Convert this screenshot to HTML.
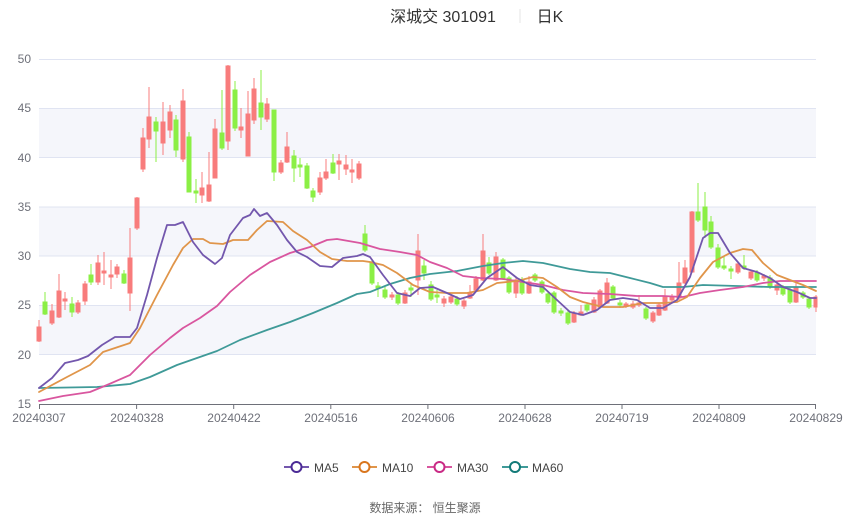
<!DOCTYPE html>
<html><head><meta charset="utf-8"><style>
body{margin:0;background:#fff;width:850px;height:517px;overflow:hidden;font-family:"Liberation Sans","Noto Sans CJK SC",sans-serif}
</style></head><body>
<svg width="850" height="517" xmlns="http://www.w3.org/2000/svg" style="display:block;font-family:'Liberation Sans','Noto Sans CJK SC',sans-serif">
<rect x="0" y="0" width="850" height="517" fill="#fff"/>
<text x="443" y="22" font-size="16" fill="#333" text-anchor="middle">深城交 301091</text>
<line x1="520" y1="9" x2="520" y2="23" stroke="#e6e6e6" stroke-width="1"/>
<text x="550" y="22" font-size="16" fill="#333" text-anchor="middle">日K</text>
<g fill="#f5f6fb">
<rect x="39" y="108.3" width="777" height="49.3"/>
<rect x="39" y="206.9" width="777" height="49.2"/>
<rect x="39" y="305.4" width="777" height="49.3"/>
</g>
<g stroke="#e0e4f2" stroke-width="1">
<line x1="39" y1="59.5" x2="816" y2="59.5"/>
<line x1="39" y1="108.5" x2="816" y2="108.5"/>
<line x1="39" y1="157.5" x2="816" y2="157.5"/>
<line x1="39" y1="207" x2="816" y2="207"/>
<line x1="39" y1="256" x2="816" y2="256"/>
<line x1="39" y1="305.5" x2="816" y2="305.5"/>
<line x1="39" y1="354.5" x2="816" y2="354.5"/>
</g>
<g font-size="12" fill="#6e7079" text-anchor="end">
<text x="31" y="63">50</text><text x="31" y="112">45</text><text x="31" y="162">40</text>
<text x="31" y="211">35</text><text x="31" y="260">30</text><text x="31" y="309">25</text>
<text x="31" y="359">20</text><text x="31" y="408">15</text>
</g>
<line x1="39" y1="404.5" x2="816" y2="404.5" stroke="#6e7079"/>
<g stroke="#6e7079">
<line x1="39.5" y1="404" x2="39.5" y2="409"/><line x1="136.6" y1="404" x2="136.6" y2="409"/>
<line x1="233.7" y1="404" x2="233.7" y2="409"/><line x1="330.8" y1="404" x2="330.8" y2="409"/>
<line x1="427.9" y1="404" x2="427.9" y2="409"/><line x1="525" y1="404" x2="525" y2="409"/>
<line x1="622" y1="404" x2="622" y2="409"/><line x1="719" y1="404" x2="719" y2="409"/>
<line x1="815.5" y1="404" x2="815.5" y2="409"/>
</g>
<g font-size="12" fill="#6e7079" text-anchor="middle">
<text x="39" y="422">20240307</text><text x="137" y="422">20240328</text><text x="234" y="422">20240422</text>
<text x="331" y="422">20240516</text><text x="428" y="422">20240606</text><text x="525" y="422">20240628</text>
<text x="622" y="422">20240719</text><text x="719" y="422">20240809</text><text x="816" y="422">20240829</text>
</g>
<g stroke="#f87c7c" fill="#f87c7c" stroke-width="1">
<line x1="39" y1="320" x2="39" y2="342"/><rect x="37" y="327" width="4" height="14"/>
<line x1="52" y1="304" x2="52" y2="325"/><rect x="50" y="311" width="4" height="12"/>
<line x1="59" y1="274" x2="59" y2="318"/><rect x="57" y="291" width="4" height="26"/>
<line x1="65" y1="292" x2="65" y2="310"/><rect x="63" y="299" width="4" height="2"/>
<line x1="78" y1="300" x2="78" y2="314"/><rect x="76" y="303" width="4" height="9"/>
<line x1="85" y1="281" x2="85" y2="305"/><rect x="83" y="284" width="4" height="17"/>
<line x1="98" y1="255" x2="98" y2="285"/><rect x="96" y="263" width="4" height="19"/>
<line x1="104" y1="252" x2="104" y2="285"/><rect x="102" y="271" width="4" height="2"/>
<line x1="111" y1="260" x2="111" y2="289"/><rect x="109" y="275" width="4" height="2"/>
<line x1="117" y1="264" x2="117" y2="278"/><rect x="115" y="267" width="4" height="7"/>
<line x1="130" y1="228" x2="130" y2="311"/><rect x="128" y="258" width="4" height="35"/>
<line x1="137" y1="197" x2="137" y2="230"/><rect x="135" y="198" width="4" height="30"/>
<line x1="143" y1="128" x2="143" y2="172"/><rect x="141" y="138" width="4" height="31"/>
<line x1="149" y1="87" x2="149" y2="148"/><rect x="147" y="117" width="4" height="22"/>
<line x1="163" y1="102" x2="163" y2="155"/><rect x="161" y="122" width="4" height="21"/>
<line x1="170" y1="105" x2="170" y2="138"/><rect x="168" y="112" width="4" height="18"/>
<line x1="183" y1="89" x2="183" y2="162"/><rect x="181" y="101" width="4" height="58"/>
<line x1="202" y1="172" x2="202" y2="203"/><rect x="200" y="188" width="4" height="7"/>
<line x1="209" y1="152" x2="209" y2="202"/><rect x="207" y="185" width="4" height="16"/>
<line x1="215" y1="119" x2="215" y2="178"/><rect x="213" y="129" width="4" height="49"/>
<line x1="228" y1="65" x2="228" y2="150"/><rect x="226" y="66" width="4" height="75"/>
<line x1="241" y1="108" x2="241" y2="138"/><rect x="239" y="127" width="4" height="3"/>
<line x1="248" y1="91" x2="248" y2="156"/><rect x="246" y="114" width="4" height="42"/>
<line x1="254" y1="78" x2="254" y2="124"/><rect x="252" y="89" width="4" height="31"/>
<line x1="267" y1="98" x2="267" y2="122"/><rect x="265" y="104" width="4" height="15"/>
<line x1="281" y1="160" x2="281" y2="174"/><rect x="279" y="163" width="4" height="9"/>
<line x1="287" y1="132" x2="287" y2="163"/><rect x="285" y="147" width="4" height="15"/>
<line x1="320" y1="172" x2="320" y2="195"/><rect x="318" y="178" width="4" height="14"/>
<line x1="326" y1="159" x2="326" y2="180"/><rect x="324" y="172" width="4" height="6"/>
<line x1="339" y1="154" x2="339" y2="180"/><rect x="337" y="161" width="4" height="3"/>
<line x1="346" y1="155" x2="346" y2="175"/><rect x="344" y="165" width="4" height="4"/>
<line x1="352" y1="159" x2="352" y2="183"/><rect x="350" y="170" width="4" height="2"/>
<line x1="359" y1="161" x2="359" y2="180"/><rect x="357" y="164" width="4" height="14"/>
<line x1="392" y1="292" x2="392" y2="300"/><rect x="390" y="295" width="4" height="2"/>
<line x1="405" y1="290" x2="405" y2="304"/><rect x="403" y="293" width="4" height="10"/>
<line x1="418" y1="234" x2="418" y2="295"/><rect x="416" y="251" width="4" height="29"/>
<line x1="444" y1="296" x2="444" y2="307"/><rect x="442" y="299" width="4" height="4"/>
<line x1="451" y1="294" x2="451" y2="304"/><rect x="449" y="297" width="4" height="5"/>
<line x1="464" y1="299" x2="464" y2="309"/><rect x="462" y="301" width="4" height="5"/>
<line x1="470" y1="285" x2="470" y2="299"/><rect x="468" y="293" width="4" height="5"/>
<line x1="476" y1="276" x2="476" y2="292"/><rect x="474" y="279" width="4" height="11"/>
<line x1="483" y1="234" x2="483" y2="281"/><rect x="481" y="251" width="4" height="29"/>
<line x1="496" y1="252" x2="496" y2="281"/><rect x="494" y="257" width="4" height="23"/>
<line x1="516" y1="278" x2="516" y2="298"/><rect x="514" y="280" width="4" height="13"/>
<line x1="529" y1="276" x2="529" y2="294"/><rect x="527" y="282" width="4" height="11"/>
<line x1="574" y1="311" x2="574" y2="323"/><rect x="572" y="313" width="4" height="9"/>
<line x1="581" y1="305" x2="581" y2="316"/><rect x="579" y="312" width="4" height="3"/>
<line x1="594" y1="297" x2="594" y2="313"/><rect x="592" y="300" width="4" height="12"/>
<line x1="600" y1="289" x2="600" y2="308"/><rect x="598" y="291" width="4" height="16"/>
<line x1="607" y1="278" x2="607" y2="304"/><rect x="605" y="283" width="4" height="20"/>
<line x1="626" y1="302" x2="626" y2="308"/><rect x="624" y="304" width="4" height="2"/>
<line x1="633" y1="301" x2="633" y2="309"/><rect x="631" y="304" width="4" height="3"/>
<line x1="639" y1="295" x2="639" y2="307"/><rect x="637" y="303" width="4" height="2"/>
<line x1="653" y1="311" x2="653" y2="323"/><rect x="651" y="313" width="4" height="8"/>
<line x1="659" y1="303" x2="659" y2="316"/><rect x="657" y="305" width="4" height="10"/>
<line x1="665" y1="289" x2="665" y2="311"/><rect x="663" y="296" width="4" height="14"/>
<line x1="672" y1="294" x2="672" y2="302"/><rect x="670" y="297" width="4" height="3"/>
<line x1="679" y1="262" x2="679" y2="300"/><rect x="677" y="283" width="4" height="15"/>
<line x1="685" y1="260" x2="685" y2="284"/><rect x="683" y="268" width="4" height="15"/>
<line x1="692" y1="211" x2="692" y2="273"/><rect x="690" y="212" width="4" height="60"/>
<line x1="738" y1="262" x2="738" y2="274"/><rect x="736" y="264" width="4" height="8"/>
<line x1="751" y1="270" x2="751" y2="280"/><rect x="749" y="272" width="4" height="6"/>
<line x1="764" y1="274" x2="764" y2="281"/><rect x="762" y="276" width="4" height="2"/>
<line x1="777" y1="283" x2="777" y2="295"/><rect x="775" y="285" width="4" height="5"/>
<line x1="796" y1="283" x2="796" y2="303"/><rect x="794" y="287" width="4" height="15"/>
<line x1="816" y1="295" x2="816" y2="312"/><rect x="814" y="297" width="3" height="10"/>
</g>
<g stroke="#8bef45" fill="#8bef45" stroke-width="1">
<line x1="45" y1="292" x2="45" y2="315"/><rect x="43" y="302" width="4" height="12"/>
<line x1="72" y1="297" x2="72" y2="317"/><rect x="70" y="304" width="4" height="8"/>
<line x1="91" y1="264" x2="91" y2="285"/><rect x="89" y="275" width="4" height="7"/>
<line x1="124" y1="270" x2="124" y2="284"/><rect x="122" y="274" width="4" height="9"/>
<line x1="156" y1="117" x2="156" y2="162"/><rect x="154" y="122" width="4" height="9"/>
<line x1="176" y1="115" x2="176" y2="157"/><rect x="174" y="120" width="4" height="30"/>
<line x1="189" y1="132" x2="189" y2="192"/><rect x="187" y="137" width="4" height="55"/>
<line x1="196" y1="179" x2="196" y2="203"/><rect x="194" y="191" width="4" height="2"/>
<line x1="222" y1="90" x2="222" y2="150"/><rect x="220" y="133" width="4" height="15"/>
<line x1="235" y1="81" x2="235" y2="131"/><rect x="233" y="90" width="4" height="38"/>
<line x1="261" y1="70" x2="261" y2="130"/><rect x="259" y="103" width="4" height="14"/>
<line x1="274" y1="110" x2="274" y2="181"/><rect x="272" y="110" width="4" height="62"/>
<line x1="294" y1="150" x2="294" y2="182"/><rect x="292" y="156" width="4" height="12"/>
<line x1="300" y1="158" x2="300" y2="177"/><rect x="298" y="165" width="4" height="2"/>
<line x1="307" y1="163" x2="307" y2="189"/><rect x="305" y="166" width="4" height="22"/>
<line x1="313" y1="188" x2="313" y2="202"/><rect x="311" y="191" width="4" height="6"/>
<line x1="333" y1="154" x2="333" y2="174"/><rect x="331" y="163" width="4" height="10"/>
<line x1="365" y1="225" x2="365" y2="252"/><rect x="363" y="234" width="4" height="16"/>
<line x1="372" y1="260" x2="372" y2="285"/><rect x="370" y="262" width="4" height="21"/>
<line x1="378" y1="282" x2="378" y2="297"/><rect x="376" y="286" width="4" height="2"/>
<line x1="385" y1="287" x2="385" y2="299"/><rect x="383" y="290" width="4" height="7"/>
<line x1="398" y1="292" x2="398" y2="305"/><rect x="396" y="295" width="4" height="8"/>
<line x1="411" y1="283" x2="411" y2="297"/><rect x="409" y="288" width="4" height="2"/>
<line x1="424" y1="260" x2="424" y2="280"/><rect x="422" y="266" width="4" height="7"/>
<line x1="431" y1="281" x2="431" y2="301"/><rect x="429" y="285" width="4" height="14"/>
<line x1="437" y1="290" x2="437" y2="303"/><rect x="435" y="295" width="4" height="2"/>
<line x1="457" y1="296" x2="457" y2="306"/><rect x="455" y="299" width="4" height="5"/>
<line x1="489" y1="257" x2="489" y2="275"/><rect x="487" y="263" width="4" height="10"/>
<line x1="503" y1="258" x2="503" y2="280"/><rect x="501" y="260" width="4" height="18"/>
<line x1="509" y1="276" x2="509" y2="294"/><rect x="507" y="278" width="4" height="14"/>
<line x1="522" y1="277" x2="522" y2="295"/><rect x="520" y="280" width="4" height="13"/>
<line x1="535" y1="273" x2="535" y2="282"/><rect x="533" y="275" width="4" height="5"/>
<line x1="542" y1="280" x2="542" y2="294"/><rect x="540" y="282" width="4" height="10"/>
<line x1="548" y1="292" x2="548" y2="304"/><rect x="546" y="294" width="4" height="8"/>
<line x1="554" y1="291" x2="554" y2="314"/><rect x="552" y="293" width="4" height="19"/>
<line x1="561" y1="308" x2="561" y2="316"/><rect x="559" y="311" width="4" height="2"/>
<line x1="568" y1="311" x2="568" y2="325"/><rect x="566" y="313" width="4" height="10"/>
<line x1="587" y1="303" x2="587" y2="312"/><rect x="585" y="305" width="4" height="5"/>
<line x1="613" y1="285" x2="613" y2="300"/><rect x="611" y="287" width="4" height="11"/>
<line x1="620" y1="300" x2="620" y2="308"/><rect x="618" y="303" width="4" height="2"/>
<line x1="646" y1="307" x2="646" y2="320"/><rect x="644" y="309" width="4" height="9"/>
<line x1="698" y1="183" x2="698" y2="222"/><rect x="696" y="212" width="4" height="8"/>
<line x1="705" y1="192" x2="705" y2="238"/><rect x="703" y="207" width="4" height="23"/>
<line x1="711" y1="216" x2="711" y2="249"/><rect x="709" y="222" width="4" height="25"/>
<line x1="718" y1="244" x2="718" y2="269"/><rect x="716" y="248" width="4" height="19"/>
<line x1="724" y1="257" x2="724" y2="270"/><rect x="722" y="266" width="4" height="2"/>
<line x1="731" y1="266" x2="731" y2="279"/><rect x="729" y="269" width="4" height="2"/>
<line x1="744" y1="255" x2="744" y2="270"/><rect x="742" y="266" width="4" height="2"/>
<line x1="757" y1="270" x2="757" y2="282"/><rect x="755" y="273" width="4" height="7"/>
<line x1="770" y1="275" x2="770" y2="289"/><rect x="768" y="278" width="4" height="9"/>
<line x1="783" y1="285" x2="783" y2="296"/><rect x="781" y="287" width="4" height="7"/>
<line x1="790" y1="288" x2="790" y2="304"/><rect x="788" y="290" width="4" height="12"/>
<line x1="803" y1="291" x2="803" y2="299"/><rect x="801" y="293" width="4" height="4"/>
<line x1="809" y1="297" x2="809" y2="309"/><rect x="807" y="299" width="4" height="8"/>
</g>
<g fill="none" stroke-width="1.8" stroke-linejoin="round" stroke-linecap="round">
<polyline stroke="#3f9a98" points="39,388 97,387 130,384 150,377 177,365 197,358 217,351 240,340 267,330 290,322 313,313 337,303 357,294 370,292 390,284 410,278 430,274 457,271 483,266 503,263 523,261 543,263 570,269 590,272 610,273 630,278 650,283 663,287 683,287 703,285 737,286 770,287 816,287"/>
<polyline stroke="#d9569f" points="39,401 63,396 90,392 107,385 130,375 150,355 170,338 183,328 200,318 217,306 230,292 250,275 270,262 290,253 310,247 327,240 337,239 360,243 370,246 380,249 400,252 417,255 430,262 447,268 463,276 480,278 503,279 523,282 543,285 563,290 583,293 610,294 637,296 663,296 683,297 700,293 720,290 743,287 763,283 780,281 816,281"/>
<polyline stroke="#e0954a" points="39,392 67,377 90,365 103,352 118,347 130,343 140,328 157,295 173,265 183,248 193,239 203,239 210,243 223,244 233,240 248,240 257,230 267,221 283,222 293,231 307,240 320,252 332,259 347,261 363,261 370,262 383,265 397,273 413,285 430,292 447,293 467,293 483,290 497,283 517,281 533,277 543,278 557,287 570,297 583,302 603,307 623,307 643,303 663,303 677,302 687,297 700,278 713,262 730,253 743,249 752,250 763,263 777,275 790,280 803,285 816,291"/>
<polyline stroke="#7357ad" points="39,388 52,378 65,363 78,360 88,356 102,345 115,337 130,337 137,328 147,295 157,258 167,225 175,225 183,222 193,242 203,255 215,264 222,258 230,235 243,218 250,215 254,209 260,216 267,213 277,225 287,240 297,252 307,257 320,266 332,267 343,258 357,256 363,254 370,257 383,275 397,293 410,296 420,288 433,287 447,293 460,299 473,295 487,278 503,267 517,278 530,285 543,287 557,300 570,312 583,315 597,310 610,300 623,298 637,300 650,308 663,308 677,300 690,277 703,238 710,233 718,233 730,253 743,268 757,272 770,278 783,287 797,292 810,298 816,298"/>
</g>
<g stroke-width="2" fill="#fff">
<line x1="284" y1="467" x2="309" y2="467" stroke="#7357ad"/><circle cx="296.5" cy="467" r="5" stroke="#4b2a96"/>
<line x1="352" y1="467" x2="377" y2="467" stroke="#e0954a"/><circle cx="364.5" cy="467" r="5" stroke="#d9761e"/>
<line x1="427" y1="467" x2="452" y2="467" stroke="#d9569f"/><circle cx="439.5" cy="467" r="5" stroke="#c92a85"/>
<line x1="502" y1="467" x2="528" y2="467" stroke="#3f9a98"/><circle cx="515" cy="467" r="5" stroke="#127a78"/>
</g>
<g font-size="12" fill="#444">
<text x="314" y="472">MA5</text><text x="382" y="472">MA10</text>
<text x="457" y="472">MA30</text><text x="532" y="472">MA60</text>
</g>
<text x="425" y="512" font-size="12" fill="#666" text-anchor="middle">数据来源：  恒生聚源</text>
</svg>
</body></html>
